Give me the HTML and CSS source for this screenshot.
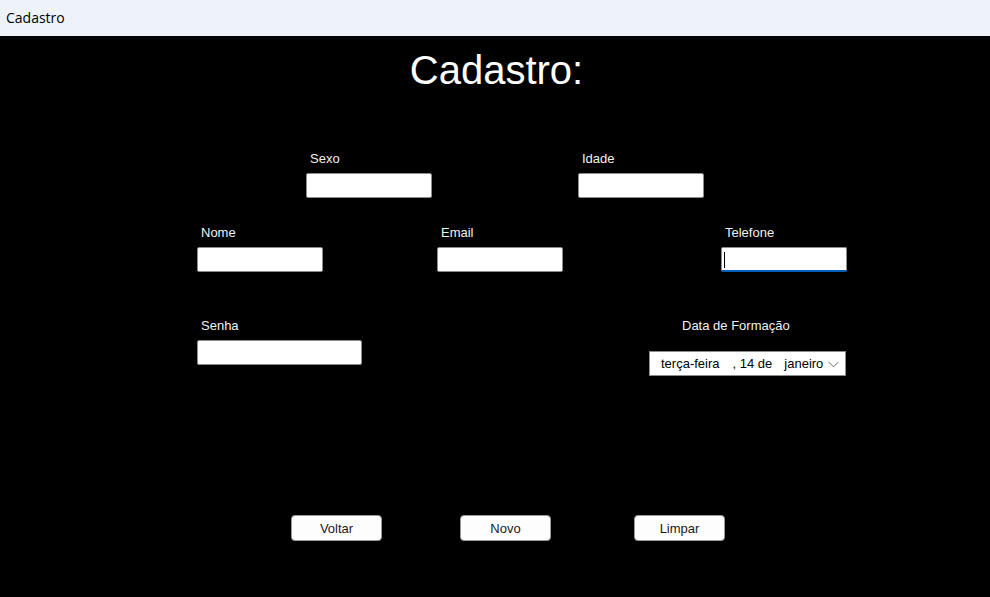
FILE: index.html
```html
<!DOCTYPE html>
<html lang="pt">
<head>
<meta charset="utf-8">
<title>Cadastro</title>
<link rel="stylesheet" href="styles.css">
</head>
<body>
<div class="window">
  <div class="titlebar">Cadastro</div>
  <main class="form">
    <h1 class="heading">Cadastro:</h1>

    <div class="row row-1">
      <div class="field">
        <span class="label">Sexo</span>
        <div class="box"></div>
      </div>
      <div class="field">
        <span class="label">Idade</span>
        <div class="box"></div>
      </div>
    </div>

    <div class="row row-2">
      <div class="field">
        <span class="label">Nome</span>
        <div class="box"></div>
      </div>
      <div class="field email">
        <span class="label">Email</span>
        <div class="box"></div>
      </div>
      <div class="field phone">
        <span class="label">Telefone</span>
        <div class="box box-focused"><span class="caret"></span></div>
      </div>
    </div>

    <div class="row row-3">
      <div class="field">
        <span class="label">Senha</span>
        <div class="box box-wide"></div>
      </div>
      <div class="field date-field">
        <span class="label date-label">Data de Formação</span>
        <div class="picker">
          <span class="seg seg-day">terça-feira</span>
          <span class="seg seg-num">, 14 de</span>
          <span class="seg seg-month">janeiro</span>
          <svg class="chevron" width="11" height="7" viewBox="0 0 11 7"><path d="M0.5 0.8 L5.5 5.8 L10.5 0.8" fill="none" stroke="#6e6e6e" stroke-width="1"/></svg>
        </div>
      </div>
    </div>

    <div class="row buttons">
      <button class="btn">Voltar</button>
      <button class="btn btn-novo">Novo</button>
      <button class="btn btn-limpar">Limpar</button>
    </div>
  </main>
</div>
</body>
</html>
```
FILE: styles.css
```css
html, body {
  margin: 0;
  padding: 0;
}

body {
  width: 990px;
  height: 597px;
  overflow: hidden;
  background: #000;
  font-family: "Liberation Sans", Arial, sans-serif;
}

.window {
  display: flex;
  flex-direction: column;
  height: 597px;
}

.titlebar {
  height: 36px;
  flex: none;
  background: #eef2f9;
  color: #000;
  font-family: "Open Sans", "Noto Sans", sans-serif;
  font-size: 14px;
  line-height: 36px;
  padding-left: 6px;
}

.form {
  flex: 1;
  display: flex;
  flex-direction: column;
  background: #000;
}

.heading {
  margin: 11px 0 0;
  padding-left: 3px;
  font-size: 40px;
  font-weight: normal;
  line-height: 46px;
  text-align: center;
  color: #fff;
}

.row {
  display: flex;
  align-items: flex-start;
}

.row-1 {
  margin-top: 58px;
  padding-left: 306px;
  gap: 146px;
}

.row-2 {
  margin-top: 27px;
  padding-left: 197px;
}

.row-3 {
  margin-top: 46px;
  padding-left: 197px;
}

.field {
  display: flex;
  flex-direction: column;
}

.email {
  margin-left: 114px;
}

.phone {
  margin-left: 158px;
}

.date-field {
  margin-left: 287px;
}

.label {
  font-size: 13px;
  line-height: 15px;
  color: #f2f2f2;
  padding-left: 4px;
  margin-bottom: 7px;
}

.date-label {
  padding-left: 33px;
  margin-bottom: 18px;
}

.box {
  box-sizing: border-box;
  width: 126px;
  height: 25px;
  background: #fff;
  border: 1px solid #8c8c8c;
  border-radius: 2px;
}

.box-wide {
  width: 165px;
}

.box-focused {
  display: flex;
  align-items: center;
  padding-left: 2px;
  border-bottom: 2px solid #005fb8;
}

.caret {
  width: 1px;
  height: 16px;
  margin-top: 1px;
  background: #000;
}

.picker {
  box-sizing: border-box;
  width: 197px;
  height: 25px;
  display: flex;
  align-items: center;
  padding-left: 11px;
  background: #fff;
  border: 1px solid #8c8c8c;
  font-size: 13px;
  color: #000;
  white-space: pre;
}

.seg-num {
  margin-left: 13px;
}

.seg-month {
  margin-left: 12px;
}

.chevron {
  margin-left: 5px;
  margin-top: 1px;
}

.buttons {
  margin-top: 139px;
  padding-left: 291px;
}

.btn {
  box-sizing: border-box;
  width: 91px;
  height: 26px;
  padding: 0;
  background: #fdfdfd;
  border: 1px solid #9a9a9a;
  border-radius: 4px;
  font-family: "Liberation Sans", Arial, sans-serif;
  font-size: 13px;
  color: #1a1a1a;
}

.btn-novo {
  margin-left: 78px;
}

.btn-limpar {
  margin-left: 83px;
}
```
